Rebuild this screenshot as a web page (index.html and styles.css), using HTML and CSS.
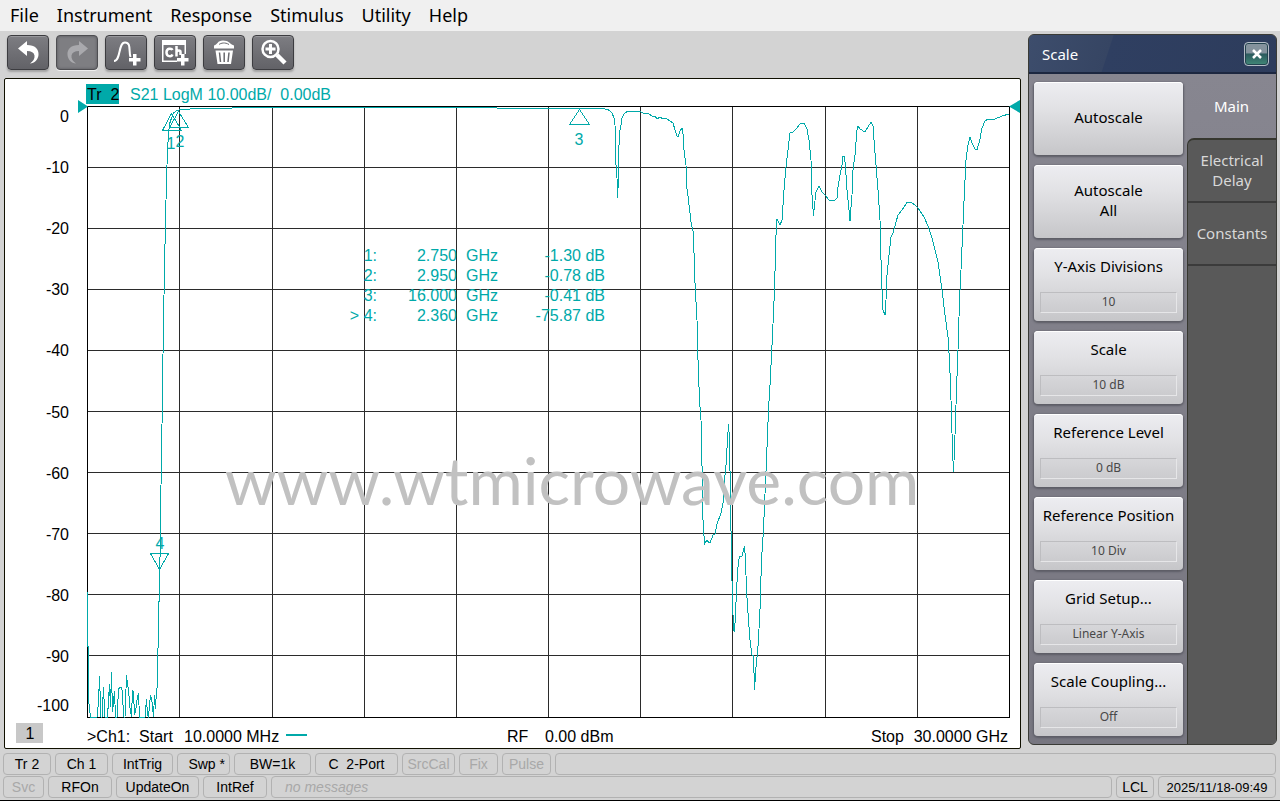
FILE: index.html
```html
<!DOCTYPE html>
<html lang="en">
<head>
  <meta charset="UTF-8">
  <meta name="viewport" content="width=device-width, initial-scale=1.0">
  <title>Network Analyzer</title>
  <link rel="stylesheet" href="styles.css">
</head>
<body>
  <nav class="menubar">
    <button type="button">File</button>
    <button type="button">Instrument</button>
    <button type="button">Response</button>
    <button type="button">Stimulus</button>
    <button type="button">Utility</button>
    <button type="button">Help</button>
  </nav>

  <main class="main">
    <div class="workspace">
      <div class="toolbar">
        <button type="button" class="tool" aria-label="Undo">
          <svg viewBox="0 0 40 33" width="40" height="33"><path d="M10 12.500L19 5v4c8 0 12 4 11.500 10c-.5 5-4 8-8.500 8.500c3-2 5-5 4.500-8c-.5-3-3-4.500-7.500-4.500v5z" fill="#fff"/></svg>
        </button>
        <button type="button" class="tool disabled" aria-label="Redo" disabled>
          <svg viewBox="0 0 40 33" width="40" height="33"><path d="M31 12.500L22 5v4c-8 0-12 4-11.500 10c.5 5 4 8 8.500 8.500c-3-2-5-5-4.500-8c.5-3 3-4.500 7.500-4.500v5z" fill="#a9a9ad"/></svg>
        </button>
        <button type="button" class="tool" aria-label="Add trace">
          <svg viewBox="0 0 40 33" width="40" height="33"><path d="M8 25c7 0 4-18.500 11-18.500c6.500 0 3.500 9 5.500 14.500" fill="none" stroke="#fff" stroke-width="2"/><path d="M27 18h3.500v4h4v3.500h-4v4H27v-4h-4V22h4z" fill="#fff"/></svg>
        </button>
        <button type="button" class="tool" aria-label="Add channel">
          <svg viewBox="0 0 40 33" width="40" height="33"><path d="M7 4h24v14h-1.500V9h-21v15.500H22V26H7z" fill="#fff"/><path d="M17.500 14c-1-2-6-2-6 2.500s5 4.500 6 2" fill="none" stroke="#fff" stroke-width="2.500"/><path d="M21.500 10v10.500M21.500 16c1-2 4-2 4 0v3" fill="none" stroke="#fff" stroke-width="2.500"/><path d="M26 18h3.500v4h4v3.500h-4v4H26v-4h-4V22h4z" fill="#fff"/></svg>
        </button>
        <button type="button" class="tool" aria-label="Delete">
          <svg viewBox="0 0 40 33" width="40" height="33"><path d="M10 9.500c4-1 3-5 9-5s6 3 11 5v3H10zM11.500 14.500h17.500l-2 13.500H13.500z" fill="#fff"/><path d="M15 8.500c2-1.500 6-2.500 10 0" fill="none" stroke="#69696e" stroke-width="1"/><path d="M15.500 16.500l1 9.500M20.200 16.500v9.500M25 16.500l-1 9.500" stroke="#69696e" stroke-width="1.500"/></svg>
        </button>
        <button type="button" class="tool" aria-label="Zoom in">
          <svg viewBox="0 0 40 33" width="40" height="33"><circle cx="17.500" cy="13" r="8" fill="none" stroke="#fff" stroke-width="2.500"/><path d="M17.500 8v10M12.500 13h10" stroke="#fff" stroke-width="3"/><path d="M24 19l8 8" stroke="#fff" stroke-width="4.500"/></svg>
        </button>
      </div>

      <section class="screen">
        <svg class="plot" viewBox="5 79 1015 669" role="img" aria-label="S21 log magnitude trace">
          <!-- graticule -->
          <path class="grid" d="M179.500 106V717M272.500 106V717M364.500 106V717M456.500 106V717M548.500 106V717M640.500 106V717M732.500 106V717M825.500 106V717M917.500 106V717M87 167.500H1009M87 228.500H1009M87 289.500H1009M87 350.500H1009M87 411.500H1009M87 472.500H1009M87 533.500H1009M87 594.500H1009M87 655.500H1009"/>
          <rect class="frame" x="87.500" y="106.500" width="922" height="611"/>

          <g class="axis">
            <text x="69" y="122">0</text>
            <text x="69" y="173">-10</text>
            <text x="69" y="234">-20</text>
            <text x="69" y="295">-30</text>
            <text x="69" y="356">-40</text>
            <text x="69" y="418">-50</text>
            <text x="69" y="479">-60</text>
            <text x="69" y="540">-70</text>
            <text x="69" y="601">-80</text>
            <text x="69" y="662">-90</text>
            <text x="69" y="711">-100</text>
          </g>

          <!-- S21 trace -->
          <polyline class="trace" points="87.500,592 87.500,646 88.500,647 88.500,700 89.500,708 90.500,717 97,717 98.500,702 99.500,676 100.500,705 101,717 102,717 103.500,687 104.500,710 105,717 107.500,717 109.500,684 110.500,707 111.500,672 112.500,712 114.500,691 115.500,717 117,717 118.500,690 119.500,687 121,687 122,690 123,705 124,717 125,717 126.500,675 127.500,684 128.500,690 130,708 131.500,717 132.500,690 133.500,692 134.500,715 136,708 137,700 138.500,693 139.500,717 145,717 146.500,699 147.500,715 148.500,717 150.500,695 152,702 153.500,717 154.500,695 155.500,709 156.500,690 157.500,686 157.500,652 158.500,645 158.500,603 159.500,600 159.500,565 160.500,550 160.500,510 161.500,460 162.500,390 163.500,320 164.500,270 165.500,220 166.500,180 167.500,150 168.500,135 169.500,124 171.500,118 173.500,113 176,111 179,110 190,109 224,108.500 240,107.500 494,107.500 500,108.500 602,108.500 608,109.500 612,113 614,118 615,125 616,165 617,178 617.500,198 618.500,178 619,145 620,130 621,125 622,118 624,114 627,111.500 640,111.500 645,114 648,113 652,116 655,116 657,119 660,117 663,119 666,118.500 670,121 673,123 675,130 677,136 678.500,136 680,131 682,128 683,134 684,150 686,165 686.500,185 688,196 691,222 693,231 694,253 695,283 697,320 698,360 699.500,400 701,420 701.500,440 702.500,490 703,520 704.500,544 707,540 708.500,542 710,543 713,535 715,534 717,524 721,513 723,503 724.500,480 726,465 728.500,424 729.500,440 730.500,500 731.500,560 732.500,600 733.500,630 734.500,631 735.500,615 736.500,590 738.500,560 740,556 742,556 744.500,546 745.500,560 746.500,590 748.500,620 750,640 752,655 753.500,655 754.500,690 755.500,675 756.500,660 757.500,655 758.500,638 760,610 761.500,560 763.500,530 764.500,505 766.500,460 768.500,410 770,385 772.500,335 774.500,290 776,235 777,219 780,225 782,220 784,190 786,167 788,150 790,133 793,132 796,129 800,124 804,123 807,129 809,140 811,160 812,195 813.500,216 814.500,205 816,192 819,186 822,192 825,195 829,200 835,200 837,198 838,187 840,175 842,165 843,156 844.500,156 846,175 847,190 849,210 850,221 851,207 852,195 853,170 855,155 857,130 858,126 860,129 865,132 868,127 871,122 873,126 874,140 876,165 878,190 880,220 881,260 882,290 883,310 885,315 886,300 887,275 889,255 891,237 893,233 898,215 902,210 907,202.500 911,202.500 915,205 918,208 924,217 928,226 932,238 938,262 942,290 945,315 948,337 949.500,360 950.500,385 951.500,415 952.500,450 953.500,472 954.500,450 955.500,420 956.500,390 958,350 959.500,300 961,270 963,225 964.500,190 966,160 968,145 970,137 972,143 975,149 977,150 980,139 982,128 985,121 988,119 995,119 1002,116 1009,114"/>

          <!-- markers -->
          <path class="trace" d="M171.500 113.500L181.500 130.500H162.500zM178.500 111.500L188.500 127.500H169.500zM579.500 109.500L589.500 124.500H569.500zM150.500 553.500H168.500L159.500 569.500z"/>
          <path class="ref" d="M78 100L88 106.500L78 113zM1020 100V113L1009 106.500z"/>
          <g class="teal mid">
            <text x="171" y="149">1</text>
            <text x="180" y="147">2</text>
            <text x="579" y="145">3</text>
            <text x="160" y="549">4</text>
          </g>

          <rect class="ref" x="86" y="84" width="33" height="20"/>
          <text x="87" y="100">Tr  2</text>
          <text class="teal" x="130" y="100">S21 LogM 10.00dB/  0.00dB</text>

          <g class="teal end">
            <text x="377" y="261">1:</text><text x="457" y="261">2.750</text><text x="498" y="261">GHz</text><text x="605" y="261">-1.30 dB</text>
            <text x="377" y="281">2:</text><text x="457" y="281">2.950</text><text x="498" y="281">GHz</text><text x="605" y="281">-0.78 dB</text>
            <text x="377" y="301">3:</text><text x="457" y="301">16.000</text><text x="498" y="301">GHz</text><text x="605" y="301">-0.41 dB</text>
            <text x="377" y="321">&gt; 4:</text><text x="457" y="321">2.360</text><text x="498" y="321">GHz</text><text x="605" y="321">-75.87 dB</text>
          </g>

          <rect x="16" y="723" width="27" height="20" fill="#c8c8c8"/>
          <text class="mid" x="30" y="739">1</text>
          <text x="87" y="742">&gt;Ch1:  Start</text>
          <text x="184" y="742">10.0000 MHz</text>
          <path class="ref" d="M286 734h21v2h-21z"/>
          <text x="507" y="742">RF</text>
          <text x="545" y="742">0.00 dBm</text>
          <text x="871" y="742">Stop</text>
          <text class="end" x="1008" y="742">30.0000 GHz</text>

          <text class="watermark" x="572" y="505">www.wtmicrowave.com</text>
        </svg>
      </section>
    </div>

    <aside class="panel">
      <header class="panel-title">
        <h1>Scale</h1>
        <button type="button" class="close" aria-label="Close">
          <svg viewBox="0 0 10 10" width="10" height="10"><path d="M1 1l8 8M9 1l-8 8" stroke="#fff" stroke-width="2.500"/></svg>
        </button>
      </header>
      <div class="panel-body">
        <div class="softkeys">
          <button type="button" class="key plain">Autoscale</button>
          <button type="button" class="key plain">Autoscale<br>All</button>
          <button type="button" class="key">Y-Axis Divisions<span class="value">10</span></button>
          <button type="button" class="key">Scale<span class="value">10 dB</span></button>
          <button type="button" class="key">Reference Level<span class="value">0 dB</span></button>
          <button type="button" class="key">Reference Position<span class="value">10 Div</span></button>
          <button type="button" class="key">Grid Setup...<span class="value">Linear Y-Axis</span></button>
          <button type="button" class="key">Scale Coupling...<span class="value">Off</span></button>
        </div>
        <div class="tabs">
          <button type="button" class="tab active">Main</button>
          <div class="tabs-rest">
            <button type="button" class="tab">Electrical<br>Delay</button>
            <button type="button" class="tab">Constants</button>
          </div>
        </div>
      </div>
    </aside>
  </main>

  <footer class="status">
    <div class="status-row first">
      <span>Tr 2</span>
      <span>Ch 1</span>
      <span>IntTrig</span>
      <span class="right">Swp *</span>
      <span>BW=1k</span>
      <span>C&nbsp; 2-Port</span>
      <span class="off">SrcCal</span>
      <span class="off">Fix</span>
      <span class="off">Pulse</span>
      <span></span>
    </div>
    <div class="status-row second">
      <span class="off">Svc</span>
      <span>RFOn</span>
      <span>UpdateOn</span>
      <span>IntRef</span>
      <span class="message">no messages</span>
      <span>LCL</span>
      <span class="clock">2025/11/18-09:49</span>
    </div>
  </footer>
</body>
</html>
```
FILE: styles.css
```css
* {
  box-sizing: border-box;
}

body {
  margin: 0;
  min-height: 100vh;
  display: flex;
  flex-direction: column;
  background: #d3d3d3;
  border-bottom: 1px solid #000;
  font-family: "Noto Sans", "Open Sans", sans-serif;
  color: #000;
}

button {
  font-family: inherit;
  color: inherit;
  cursor: pointer;
}

/* menu */
.menubar {
  display: flex;
  gap: 18px;
  height: 31px;
  padding: 0 10px;
  background: #f0f0f0;
}

.menubar button {
  padding: 0 0 2px;
  border: 0;
  background: none;
  font-size: 18px;
}

.main {
  flex: 1;
  display: flex;
  gap: 7px;
  padding: 0 3px 0 4px;
}

.workspace {
  flex: 1;
  min-width: 0;
  display: flex;
  flex-direction: column;
}

/* toolbar */
.toolbar {
  display: flex;
  gap: 7px;
  height: 47px;
  padding: 4px 3px;
}

.tool {
  width: 42px;
  height: 35px;
  padding: 0;
  border: 1px solid #3c3c40;
  border-radius: 4px;
  background: linear-gradient(#7d7d82, #626267);
  box-shadow: inset 0 1px 0 #98989c, 0 2px 2px #a2a2a2;
}

.tool svg {
  display: block;
}

.tool.disabled {
  background: #7e7e82;
  border-color: #4e4e52;
  box-shadow: inset 0 0 3px #55555a, 0 1px 0 #eee;
}

/* plot */
.screen {
  flex: 1;
  display: flex;
  background: #fff;
  border: 1px solid #101000;
  border-radius: 2px;
}

.plot {
  display: block;
  width: 100%;
  height: 100%;
  font-family: "Liberation Sans", Arial, sans-serif;
  font-size: 16px;
}

.plot text {
  white-space: pre;
}

.grid,
.frame,
.trace {
  fill: none;
  stroke-width: 1;
  shape-rendering: crispEdges;
}

.grid {
  stroke: #2b2b2b;
}

.frame {
  stroke: #000;
}

.trace {
  stroke: #00a9a9;
}

.ref,
.teal {
  fill: #00a9a9;
}

.mid {
  text-anchor: middle;
}

.axis,
.end {
  text-anchor: end;
}

.watermark {
  font-family: Lato, sans-serif;
  font-size: 66px;
  text-anchor: middle;
  fill: #c1c1c1;
}

/* side panel */
.panel {
  width: 249px;
  margin: 3px 0 4px;
  display: flex;
  flex-direction: column;
  border: 1px solid #3a3b36;
  border-radius: 6px;
  background: #595959;
  overflow: hidden;
}

.panel-title {
  display: flex;
  align-items: center;
  justify-content: space-between;
  height: 39px;
  padding: 0 7px 0 13px;
  background: linear-gradient(108deg, #3d4d6c 0, #364563 80px, #2f3f61 81px, #2d3c5c 100%);
  border-bottom: 2px solid #1c2740;
  color: #fff;
}

.panel-title h1 {
  margin: 0;
  font-size: 15px;
  font-weight: 400;
}

.close {
  display: flex;
  align-items: center;
  justify-content: center;
  width: 25px;
  height: 24px;
  padding: 0;
  border: 1px solid #b5bdc6;
  border-radius: 4px;
  background: linear-gradient(#84929d 45%, #2b5a5d 50%, #428878);
  box-shadow: inset 0 0 0 1px #24434f;
}

.panel-body {
  flex: 1;
  display: flex;
  background: linear-gradient(#878690, #777680);
}

.softkeys {
  flex: 1;
  display: flex;
  flex-direction: column;
  gap: 10px;
  padding: 8px 4px 8px 5px;
}

.key {
  flex: 1;
  display: flex;
  flex-direction: column;
  align-items: center;
  justify-content: space-between;
  padding: 8px 6px;
  border: 0;
  border-radius: 4px;
  background: linear-gradient(#ededf1, #e2e2e5 35%, #c6c6c9);
  box-shadow: inset 0 1px 0 #fff, 0 1px 2px 1px #5d5d66;
  font-size: 15px;
  line-height: 20px;
}

.key.plain {
  justify-content: center;
  padding: 6px 6px 10px;
}

.value {
  align-self: stretch;
  height: 21px;
  border: 1px solid #bdbdc0;
  border-right-color: #e6e6e8;
  border-bottom-color: #e6e6e8;
  font-size: 12px;
  line-height: 18px;
  color: #484848;
}

.tabs {
  width: 89px;
  display: flex;
  flex-direction: column;
}

.tabs-rest {
  flex: 1;
  border-top: 2px solid #36372f;
  border-left: 1px solid #36372f;
  border-top-left-radius: 7px;
  background: #595959;
}

.tab {
  display: block;
  width: 100%;
  height: 63px;
  padding: 0 0 2px;
  border: 0;
  border-bottom: 2px solid #3b3b3b;
  background: none;
  color: #d8d8d8;
  font-size: 15px;
  line-height: 20px;
}

.tab.active {
  height: 64px;
  padding: 0;
  border: 0;
  color: #fff;
}

/* status bar */
.status {
  display: flex;
  flex-direction: column;
  gap: 1px;
  padding: 4px 4px 2px 3px;
  font-family: "Liberation Sans", Arial, sans-serif;
  font-size: 14px;
}

.status-row {
  display: grid;
  gap: 4px;
}

.first {
  grid-template-columns: 48px 53px 61px 53px 77px 83px 53px 39px 49px 1fr;
}

.second {
  grid-template-columns: 41px 64px 83px 64px 1fr 38px 118px;
}

.status-row span {
  height: 22px;
  border: 1px solid #b2b2b2;
  border-radius: 4px;
  line-height: 21px;
  text-align: center;
  white-space: nowrap;
}

.status-row .right {
  padding-right: 4px;
  text-align: right;
}

.status-row .off {
  color: #a8a8a8;
}

.status-row .message {
  padding-left: 13px;
  text-align: left;
  font-style: italic;
  color: #a8a8a8;
}

.status-row .clock {
  font-size: 13px;
}
```
